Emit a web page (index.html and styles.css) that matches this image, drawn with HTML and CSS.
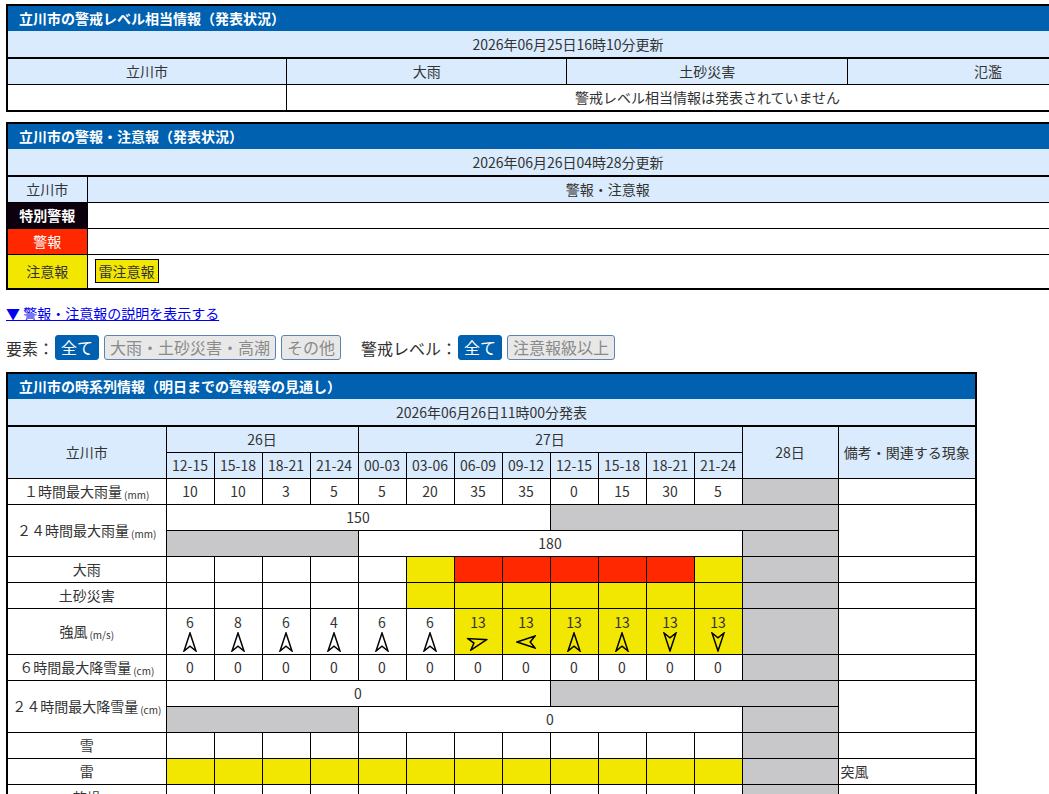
FILE: index.html
```html
<!DOCTYPE html>
<html lang="ja">
<head>
<meta charset="utf-8">
<title>立川市の警報・注意報</title>
<link rel="stylesheet" href="styles.css">
</head>
<body>
<svg class="defs" width="0" height="0" aria-hidden="true">
  <symbol id="arrow" viewBox="0 0 14 20">
    <path d="M7 1 L13 19 L7 14.2 L1 19 Z" fill="none" stroke="#000" stroke-width="1.5" stroke-linejoin="miter"/>
  </symbol>
</svg>
<div class="page">

  <section class="panel panel-wide">
    <div class="panel-title">立川市の警戒レベル相当情報（発表状況）</div>
    <table class="grid">
      <colgroup><col class="w-a"><col class="w-b"><col class="w-b"><col class="w-b"></colgroup>
      <tr class="stamp"><td colspan="4">2026年06月25日16時10分更新</td></tr>
      <tr class="head"><th>立川市</th><th>大雨</th><th>土砂災害</th><th>氾濫</th></tr>
      <tr><td></td><td colspan="3">警戒レベル相当情報は発表されていません</td></tr>
    </table>
  </section>

  <section class="panel panel-wide">
    <div class="panel-title">立川市の警報・注意報（発表状況）</div>
    <table class="grid">
      <colgroup><col class="w-kind"><col></colgroup>
      <tr class="stamp"><td colspan="2">2026年06月26日04時28分更新</td></tr>
      <tr class="head"><th>立川市</th><th>警報・注意報</th></tr>
      <tr><td class="lv-special">特別警報</td><td></td></tr>
      <tr><td class="lv-warn">警報</td><td></td></tr>
      <tr class="tall"><td class="lv-adv">注意報</td><td class="left"><span class="badge">雷注意報</span></td></tr>
    </table>
  </section>

  <p class="explain"><a href="#">▼ 警報・注意報の説明を表示する</a></p>

  <div class="filters">
    <div class="filter-group">
      <span class="filter-label">要素：</span>
      <button class="chip on">全て</button>
      <button class="chip">大雨・土砂災害・高潮</button>
      <button class="chip">その他</button>
    </div>
    <div class="filter-group">
      <span class="filter-label">警戒レベル：</span>
      <button class="chip on">全て</button>
      <button class="chip">注意報級以上</button>
    </div>
  </div>

  <section class="panel panel-series">
    <div class="panel-title">立川市の時系列情報（明日までの警報等の見通し）</div>
    <table class="grid series">
      <colgroup><col class="w-label"><col class="w-slot" span="12"><col class="w-day"><col class="w-note"></colgroup>
      <tr class="stamp"><td colspan="15">2026年06月26日11時00分発表</td></tr>
      <tr class="head"><th rowspan="2">立川市</th><th colspan="4">26日</th><th colspan="8">27日</th><th rowspan="2">28日</th><th rowspan="2">備考・関連する現象</th></tr>
      <tr class="head"><th>12-15</th><th>15-18</th><th>18-21</th><th>21-24</th><th>00-03</th><th>03-06</th><th>06-09</th><th>09-12</th><th>12-15</th><th>15-18</th><th>18-21</th><th>21-24</th></tr>

      <tr><th class="label">１時間最大雨量<small>(mm)</small></th><td>10</td><td>10</td><td>3</td><td>5</td><td>5</td><td>20</td><td>35</td><td>35</td><td>0</td><td>15</td><td>30</td><td>5</td><td class="na"></td><td></td></tr>

      <tr><th class="label" rowspan="2">２４時間最大雨量<small>(mm)</small></th><td colspan="8">150</td><td class="na" colspan="5"></td><td rowspan="2"></td></tr>
      <tr><td class="na" colspan="4"></td><td colspan="8">180</td><td class="na"></td></tr>

      <tr><th class="label">大雨</th><td></td><td></td><td></td><td></td><td></td><td class="lv-adv"></td><td class="lv-warn"></td><td class="lv-warn"></td><td class="lv-warn"></td><td class="lv-warn"></td><td class="lv-warn"></td><td class="lv-adv"></td><td class="na"></td><td></td></tr>

      <tr><th class="label">土砂災害</th><td></td><td></td><td></td><td></td><td></td><td class="lv-adv"></td><td class="lv-adv"></td><td class="lv-adv"></td><td class="lv-adv"></td><td class="lv-adv"></td><td class="lv-adv"></td><td class="lv-adv"></td><td class="na"></td><td></td></tr>

      <tr class="wind"><th class="label">強風<small>(m/s)</small></th>
        <td><div class="wv">6</div><svg class="wa"><use href="#arrow"/></svg></td>
        <td><div class="wv">8</div><svg class="wa"><use href="#arrow"/></svg></td>
        <td><div class="wv">6</div><svg class="wa"><use href="#arrow"/></svg></td>
        <td><div class="wv">4</div><svg class="wa"><use href="#arrow"/></svg></td>
        <td><div class="wv">6</div><svg class="wa"><use href="#arrow"/></svg></td>
        <td><div class="wv">6</div><svg class="wa"><use href="#arrow"/></svg></td>
        <td class="lv-adv"><div class="wv">13</div><svg class="wa r-ene"><use href="#arrow"/></svg></td>
        <td class="lv-adv"><div class="wv">13</div><svg class="wa r-w"><use href="#arrow"/></svg></td>
        <td class="lv-adv"><div class="wv">13</div><svg class="wa"><use href="#arrow"/></svg></td>
        <td class="lv-adv"><div class="wv">13</div><svg class="wa"><use href="#arrow"/></svg></td>
        <td class="lv-adv"><div class="wv">13</div><svg class="wa r-s"><use href="#arrow"/></svg></td>
        <td class="lv-adv"><div class="wv">13</div><svg class="wa r-s"><use href="#arrow"/></svg></td>
        <td class="na"></td><td></td></tr>

      <tr><th class="label">６時間最大降雪量<small>(cm)</small></th><td>0</td><td>0</td><td>0</td><td>0</td><td>0</td><td>0</td><td>0</td><td>0</td><td>0</td><td>0</td><td>0</td><td>0</td><td class="na"></td><td></td></tr>

      <tr><th class="label" rowspan="2">２４時間最大降雪量<small>(cm)</small></th><td colspan="8">0</td><td class="na" colspan="5"></td><td rowspan="2"></td></tr>
      <tr><td class="na" colspan="4"></td><td colspan="8">0</td><td class="na"></td></tr>

      <tr><th class="label">雪</th><td></td><td></td><td></td><td></td><td></td><td></td><td></td><td></td><td></td><td></td><td></td><td></td><td class="na"></td><td></td></tr>

      <tr><th class="label">雷</th><td class="lv-adv"></td><td class="lv-adv"></td><td class="lv-adv"></td><td class="lv-adv"></td><td class="lv-adv"></td><td class="lv-adv"></td><td class="lv-adv"></td><td class="lv-adv"></td><td class="lv-adv"></td><td class="lv-adv"></td><td class="lv-adv"></td><td class="lv-adv"></td><td class="na"></td><td class="left">突風</td></tr>

      <tr><th class="label">乾燥</th><td></td><td></td><td></td><td></td><td></td><td></td><td></td><td></td><td></td><td></td><td></td><td></td><td class="na"></td><td></td></tr>
    </table>
  </section>

</div>
</body>
</html>
```

FILE: styles.css
```css
* { box-sizing: border-box; }

html, body {
  margin: 0;
  padding: 0;
  background: #fff;
}

body {
  font-family: "Noto Sans CJK JP", "Noto Sans", sans-serif;
  font-size: 14px;
  color: #333;
}

.defs { position: absolute; width: 0; height: 0; overflow: hidden; }

.page {
  padding: 4px 0 20px 6px;
}

.panel {
  border: 2px solid #000;
  background: #fff;
  margin-bottom: 10px;
}

.panel-wide { width: 1124px; }
.panel-series { width: 971px; }

.panel-title {
  background: #0061b0;
  color: #fff;
  font-weight: bold;
  font-size: 14px;
  height: 25px;
  line-height: 25px;
  padding-left: 11px;
  white-space: nowrap;
}

.grid {
  width: 100%;
  border-collapse: collapse;
  border-style: hidden;
  table-layout: fixed;
}

.grid td,
.grid th {
  border: 1px solid #000;
  height: 26px;
  padding: 0;
  line-height: 20px;
  text-align: center;
  font-weight: normal;
  white-space: nowrap;
  vertical-align: middle;
}

.grid .stamp td {
  background: #d9ebfd;
  border-bottom: 2px solid #000;
  height: 27px;
}

.grid .head th {
  background: #d9ebfd;
}

.w-a { width: 278px; }
.w-b { width: 280px; }
.w-kind { width: 79px; }

.w-label { width: 158px; }
.w-slot { width: 48px; }
.w-day { width: 96px; }
.w-note { width: 137px; }

.grid .label {
  background: #fff;
}

.grid small {
  font-size: 10px;
  line-height: 10px;
  vertical-align: -2px;
  margin-left: 2px;
}

.grid td.left {
  text-align: left;
  padding-left: 2px;
}

.lv-special { background: #0c000c; color: #fff; font-weight: bold; }
.lv-warn { background: #ff2800; color: #fff; }
.lv-adv { background: #f2e700; }
.na { background: #c8c8cb; }

.grid td.lv-special { font-weight: bold; }

.grid .tall td { height: 34px; }
.grid .tall td.left { padding-left: 7px; }

.badge {
  display: inline-block;
  background: #f2e700;
  border: 1px solid #000;
  padding: 0 3px;
  line-height: 22px;
  color: #333;
}

.explain {
  margin: 14px 0 0;
  font-size: 14px;
  line-height: 18px;
}

.explain a { color: #0000ee; }

.filters {
  display: flex;
  align-items: center;
  gap: 20px;
  margin: 13px 0 12px;
}

.filter-group {
  display: flex;
  align-items: center;
  gap: 5px;
}

.filter-label {
  font-size: 16px;
  color: #333;
  margin-right: -4px;
}

.chip {
  font-family: inherit;
  font-size: 16px;
  line-height: 23px;
  height: 25px;
  padding: 0 5px;
  border: 1px solid #5b84b1;
  border-radius: 3px;
  background: #e8e8e8;
  color: #8a8a8a;
}

.chip.on {
  background: #0061b0;
  border-color: #0061b0;
  color: #fff;
}

.grid .wind td,
.grid .wind th { height: 46px; }

.wind td { padding-top: 4px; }

.wv {
  line-height: 16px;
}

.wa {
  display: block;
  margin: 2px auto 0;
  width: 14px;
  height: 20px;
}

.r-ene { transform: rotate(75deg); }
.r-w { transform: rotate(-90deg); }
.r-s { transform: rotate(180deg); }
```
